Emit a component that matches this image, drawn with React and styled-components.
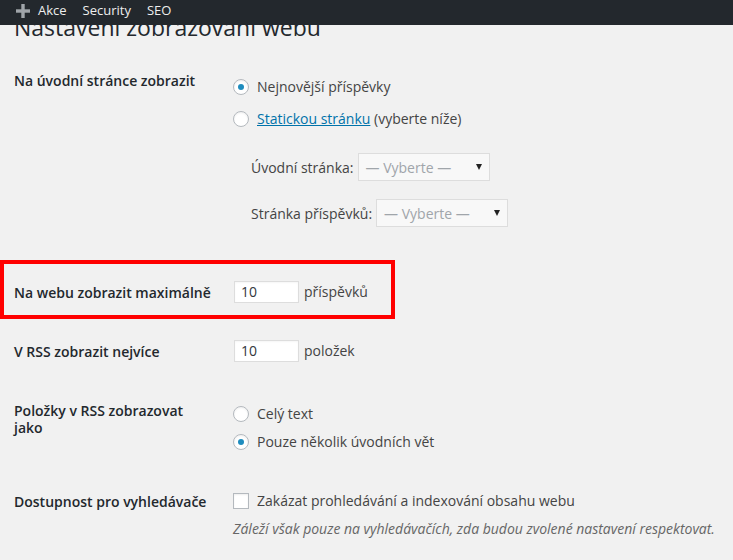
import styled, { createGlobalStyle } from "styled-components";

const GlobalStyle = createGlobalStyle`
  html, body {
    margin: 0;
    padding: 0;
    background: #f1f1f1;
  }
  body {
    font-family: "Open Sans", "Liberation Sans", sans-serif;
    font-size: 14px;
    color: #444;
  }
`;

// top admin bar, fixed over the page
const AdminBar = styled.div`
  position: fixed;
  top: 0;
  left: 0;
  right: 0;
  height: 25px;
  background: #23282d;
  display: flex;
  align-items: flex-start;
  gap: 16px;
  padding-left: 16px;
  z-index: 10;
`;

const BarItem = styled.div`
  display: flex;
  align-items: center;
  gap: 8px;
  height: 21px;
  line-height: 21px;
  font-size: 13px;
  color: #eee;
`;

const Wrap = styled.div`
  padding: 12px 0 0 14px;
`;

const Title = styled.h1`
  margin: 0;
  font-size: 23px;
  font-weight: 400;
  line-height: 30px;
  color: #23282d;
`;

const Row = styled.div`
  display: flex;
  align-items: ${(p) => (p.$center ? "center" : "flex-start")};
  margin-top: ${(p) => p.$mt || 0}px;
`;

const Th = styled.div`
  box-sizing: border-box;
  width: 219px;
  flex: none;
  padding-top: ${(p) => p.$pt || 0}px;
  padding-right: 20px;
  font-weight: 600;
  font-size: 14px;
  line-height: 17px;
  color: #23282d;
`;

const Td = styled.div`
  flex: 1;
  display: flex;
  flex-direction: column;
  padding-top: ${(p) => p.$pt || 0}px;
  gap: ${(p) => p.$gap || 0}px;
`;

const Highlight = styled.div`
  box-sizing: border-box;
  width: 395px;
  height: 59px;
  margin: 33px 0 0 -14px;
  padding: 17px 0 0 10px;
  border: 4px solid #ff0000;
`;

const Line = styled.div`
  display: flex;
  align-items: center;
  height: 20px;
  line-height: 20px;
  gap: 8px;
  margin-top: ${(p) => p.$mt || 0}px;
`;

const Radio = styled.span`
  box-sizing: border-box;
  width: 16px;
  height: 16px;
  flex: none;
  border-radius: 50%;
  border: 1px solid #b4b9be;
  background: #fff;
  box-shadow: inset 0 1px 2px rgba(0, 0, 0, 0.07);
  display: flex;
  align-items: center;
  justify-content: center;

  &::before {
    content: "";
    width: 6px;
    height: 6px;
    border-radius: 50%;
    background: ${(p) => (p.$checked ? "#1e8cbe" : "transparent")};
  }
`;

const Checkbox = styled.span`
  box-sizing: border-box;
  width: 16px;
  height: 16px;
  flex: none;
  border: 1px solid #b4b9be;
  background: #fff;
  box-shadow: inset 0 1px 2px rgba(0, 0, 0, 0.07);
`;

const Link = styled.a`
  color: #0073aa;
  text-decoration: underline;
`;

const SelectRow = styled.div`
  display: flex;
  align-items: center;
  gap: 4px;
  height: 28px;
  margin: ${(p) => p.$mt || 0}px 0 0 18px;
`;

const Select = styled.div`
  box-sizing: border-box;
  width: 132px;
  height: 28px;
  border: 1px solid #ddd;
  background: #f8f8f8;
  color: #a0a5aa;
  display: flex;
  align-items: center;
  justify-content: space-between;
  padding: 0 7px 0 7px;

  &::after {
    content: "";
    border-left: 3px solid transparent;
    border-right: 3px solid transparent;
    border-top: 6px solid #222;
  }
`;

const NumberInput = styled.div`
  box-sizing: border-box;
  width: 65px;
  height: 22px;
  margin-left: 1px;
  border: 1px solid #ddd;
  background: #fff;
  padding: 0 6px;
  line-height: 20px;
  color: #32373c;
  box-shadow: inset 0 1px 2px rgba(0, 0, 0, 0.04);
`;

const Field = styled.div`
  display: flex;
  align-items: center;
  gap: 5px;
  line-height: 20px;
`;

const Description = styled.p`
  margin: 9px 0 0;
  font-size: 14px;
  line-height: 18px;
  font-style: italic;
  color: #666;
`;

function PlusIcon() {
  return (
    <svg width="14" height="14" viewBox="0 0 14 14">
      <rect x="0" y="5.3" width="14" height="3.4" fill="#a0a5aa" />
      <rect x="5.3" y="0" width="3.4" height="14" fill="#a0a5aa" />
    </svg>
  );
}

export default function App() {
  return (
    <>
      <GlobalStyle />
      <AdminBar>
        <BarItem>
          <PlusIcon />
          Akce
        </BarItem>
        <BarItem>Security</BarItem>
        <BarItem>SEO</BarItem>
      </AdminBar>
      <Wrap>
        <Title>Nastavení zobrazování webu</Title>

        <Row $mt={10}>
          <Th $pt={20}>Na úvodní stránce zobrazit</Th>
          <Td $pt={25}>
            <Line>
              <Radio $checked />
              Nejnovější příspěvky
            </Line>
            <Line $mt={12}>
              <Radio />
              <span>
                <Link>Statickou stránku</Link> (vyberte níže)
              </span>
            </Line>
            <SelectRow $mt={24}>
              Úvodní stránka:
              <Select>— Vyberte —</Select>
            </SelectRow>
            <SelectRow $mt={18}>
              Stránka příspěvků:
              <Select>— Vyberte —</Select>
            </SelectRow>
          </Td>
        </Row>

        <Highlight>
          <Row $center>
            <Th>Na webu zobrazit maximálně</Th>
            <Field>
              <NumberInput>10</NumberInput>
              příspěvků
            </Field>
          </Row>
        </Highlight>

        <Row $center $mt={21}>
          <Th>V RSS zobrazit nejvíce</Th>
          <Field>
            <NumberInput>10</NumberInput>
            položek
          </Field>
        </Row>

        <Row $mt={40}>
          <Th>Položky v RSS zobrazovat jako</Th>
          <Td $pt={2} $gap={8}>
            <Line>
              <Radio />
              Celý text
            </Line>
            <Line>
              <Radio $checked />
              Pouze několik úvodních vět
            </Line>
          </Td>
        </Row>

        <Row $mt={39}>
          <Th $pt={2}>Dostupnost pro vyhledávače</Th>
          <Td>
            <Line>
              <Checkbox />
              Zakázat prohledávání a indexování obsahu webu
            </Line>
            <Description>
              Záleží však pouze na vyhledávačích, zda budou zvolené nastavení
              respektovat.
            </Description>
          </Td>
        </Row>
      </Wrap>
    </>
  );
}
